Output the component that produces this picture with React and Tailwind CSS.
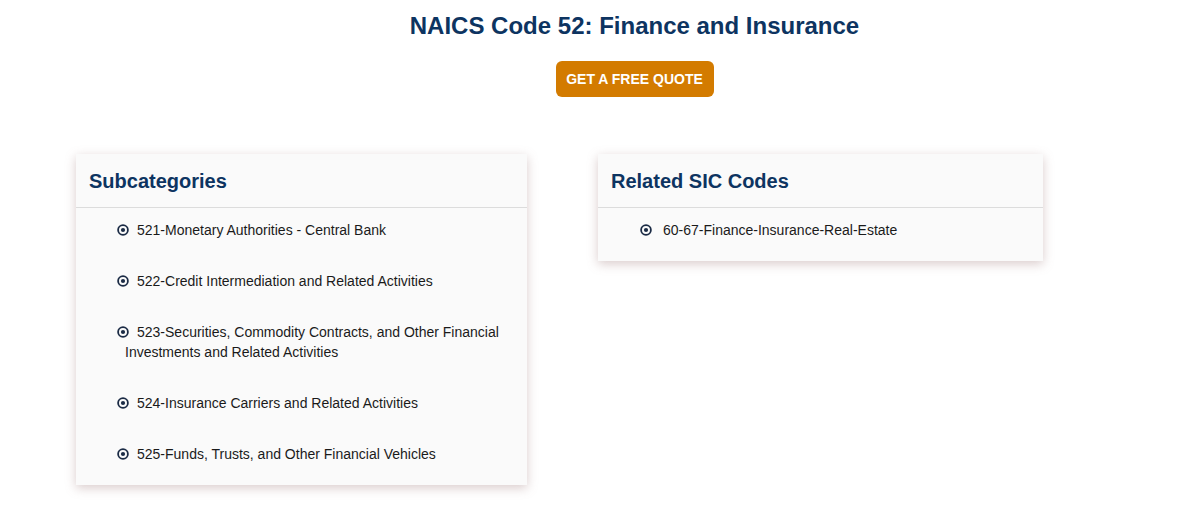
import React from 'react';

const subcategories = [
  '521-Monetary Authorities - Central Bank',
  '522-Credit Intermediation and Related Activities',
  '523-Securities, Commodity Contracts, and Other Financial Investments and Related Activities',
  '524-Insurance Carriers and Related Activities',
  '525-Funds, Trusts, and Other Financial Vehicles',
];

const sicCodes = ['60-67-Finance-Insurance-Real-Estate'];

const Bullet = ({ gap }) => (
  <svg width="12" height="12" viewBox="0 0 12 12" className={`inline-block align-[-1px] -ml-[8px] ${gap}`}>
    <circle cx="6" cy="6" r="4.9" fill="none" stroke="#1b2b45" strokeWidth="1.8" />
    <circle cx="6" cy="6" r="2.1" fill="#1b2b45" />
  </svg>
);

const Card = ({ title, items, width, indent, gap }) => (
  <div
    className="bg-[#fafafa] shadow-[0_3px_10px_rgba(150,110,110,0.35)]"
    style={{ width }}
  >
    <div className="h-[54px] flex items-center px-[13px] border-b border-[#dcdcdc]">
      <h3 className="text-[20px] font-bold text-[#0d3461]">{title}</h3>
    </div>
    <ul className="flex flex-col gap-[31px] pt-[12px] pb-[21px] pr-[20px]">
      {items.map((item) => (
        <li key={item} className={`text-[14px] leading-[20px] text-[#1a1a1a] ${indent}`}>
          <Bullet gap={gap} />
          {item}
        </li>
      ))}
    </ul>
  </div>
);

export default function App() {
  return (
    <div className="min-h-[505px] bg-white font-['Liberation_Sans',Arial,sans-serif]">
      <div className="flex flex-col items-center pl-[68px] pt-[12px]">
        <h1 className="text-[24px] leading-[28px] font-bold text-[#0d3461]">
          NAICS Code 52: Finance and Insurance
        </h1>
        <button className="mt-[21px] h-[36px] w-[158px] rounded-[6px] bg-[#d37b00] text-white text-[14px] font-bold uppercase">
          Get a free quote
        </button>
      </div>
      <div className="flex items-start gap-[71px] pl-[76px] mt-[57px]">
        <Card title="Subcategories" items={subcategories} width={451} indent="pl-[49px]" gap="mr-[8px]" />
        <Card title="Related SIC Codes" items={sicCodes} width={445} indent="pl-[50px]" gap="mr-[11px]" />
      </div>
    </div>
  );
}
